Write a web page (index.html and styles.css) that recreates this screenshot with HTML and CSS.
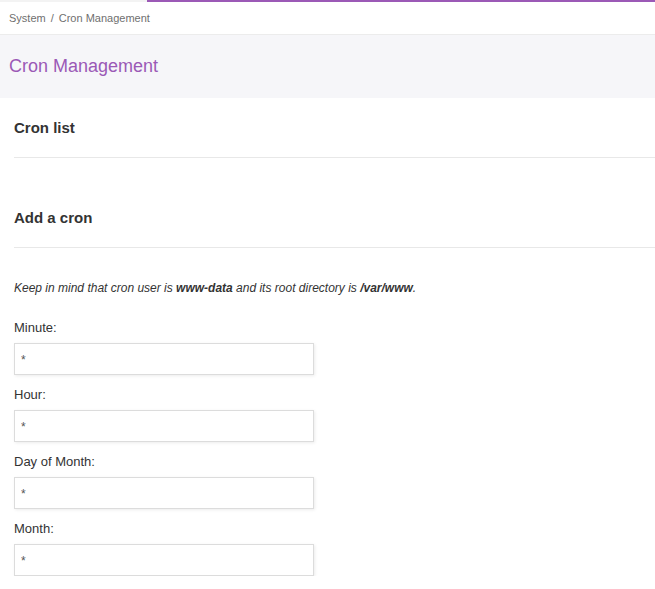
FILE: index.html
```html
<!DOCTYPE html>
<html>
<head>
<meta charset="utf-8">
<link rel="stylesheet" href="styles.css">
</head>
<body>
<div class="topbar">
  <div class="progress"></div>
  <nav class="breadcrumb"><span>System</span><span class="sep">/</span><span>Cron Management</span></nav>
</div>
<header class="page-header"><h1>Cron Management</h1></header>
<main class="content">
  <section class="block first"><h2>Cron list</h2></section>
  <section class="block second"><h2>Add a cron</h2></section>
  <p class="note">Keep in mind that cron user is <b>www-data</b> and its root directory is <b>/var/www</b>.</p>
  <form class="form">
    <div class="field"><label>Minute:</label><input type="text" value="*"></div>
    <div class="field"><label>Hour:</label><input type="text" value="*"></div>
    <div class="field"><label>Day of Month:</label><input type="text" value="*"></div>
    <div class="field"><label>Month:</label><input type="text" value="*"></div>
  </form>
</main>
</body>
</html>
```
FILE: styles.css
```css
html, body { margin: 0; padding: 0; background: #fff; }
body { font-family: "Liberation Sans", Arial, sans-serif; color: #333; overflow: hidden; }
.topbar { position: relative; height: 34px; border-bottom: 1px solid #ececec; background: #fff; }
.topbar::before { content: ""; position: absolute; left: 0; top: 0; width: 147px; height: 2px; background: #f3f3f3; }
.progress { position: absolute; left: 147px; right: 0; top: 0; height: 2px; background: #9b59b6; }
.breadcrumb { display: flex; align-items: center; height: 35px; padding-left: 9px; font-size: 11px; color: #6f6f6f; }
.breadcrumb .sep { margin: 0 5px; }
.page-header { box-sizing: border-box; height: 63px; background: #f6f6f9; display: flex; align-items: center; padding: 0 0 2px 9px; }
.page-header h1 { margin: 0; font-size: 18px; font-weight: normal; color: #9b59b6; line-height: 22px; }
.content { padding-left: 14px; }
.block { border-bottom: 1px solid #e8e8e8; }
.block h2 { margin: 0; font-size: 15px; line-height: 18px; font-weight: bold; color: #333; }
.block.first { padding: 21px 0 20px; }
.block.second { padding: 21px 0 20px; margin-top: 30px; }
.note { margin: 32px 0 0; font-size: 12px; line-height: 16px; font-style: italic; color: #333; }
.form { margin-top: 24px; display: flex; flex-direction: column; gap: 12px; }
.field { display: flex; flex-direction: column; gap: 7px; }
.field label { font-size: 13px; line-height: 16px; color: #333; }
.field input { box-sizing: border-box; width: 300px; height: 32px; border: 1px solid #dcdcdc; box-shadow: 1px 1px 3px rgba(0,0,0,0.08); padding: 2px 6px 0; font-family: "Liberation Sans", Arial, sans-serif; font-size: 12px; color: #555; outline: none; margin: 0; }
```
